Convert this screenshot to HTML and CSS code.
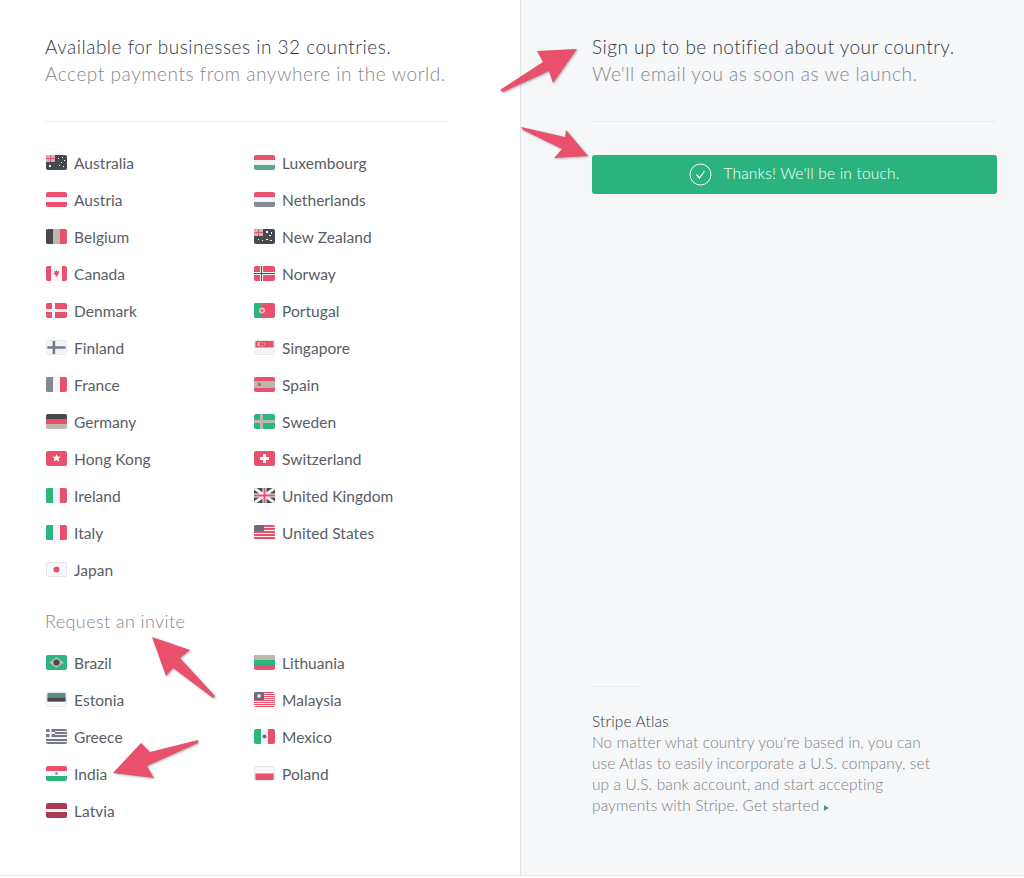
FILE: index.html
```html
<!DOCTYPE html>
<html lang="en">

<head>
    <meta charset="UTF-8">
    <title>Global availability</title>
    <link rel="stylesheet" href="styles.css">
</head>

<body>
    <div class="page">
        <div class="left">
            <h2 class="title">Available for businesses in 32 countries.</h2>
            <p class="sub">Accept payments from anywhere in the world.</p>
            <div class="rule"></div>
            <ul class="countries">
                <li><svg class="flag" viewBox="0 0 21 15"><rect width="21" height="15" fill="#47494f"/><rect width="9" height="7" fill="#b9bbc0"/><path d="M0 3h9v1H0zM4 0h1v7H4z" fill="#e8506c"/><path d="M3 10h2v2H3zM12 3h1v1h-1zM16 2h1v1h-1zM18 5h1v1h-1zM15 7h1v1h-1zM13 10h1v1h-1zM17 11h1v1h-1z" fill="#fff"/></svg>Australia</li>
                <li><svg class="flag" viewBox="0 0 21 15"><rect width="21" height="15" fill="#f2f5f7"/><rect width="21" height="5" fill="#e8506c"/><rect y="10" width="21" height="5" fill="#5fa58c"/></svg>Luxembourg</li>
                <li><svg class="flag" viewBox="0 0 21 15"><rect width="21" height="15" fill="#e8506c"/><rect y="5" width="21" height="5" fill="#f2f5f7"/></svg>Austria</li>
                <li><svg class="flag" viewBox="0 0 21 15"><rect width="21" height="15" fill="#f2f5f7"/><rect width="21" height="5" fill="#e8506c"/><rect y="10" width="21" height="5" fill="#86898f"/></svg>Netherlands</li>
                <li><svg class="flag" viewBox="0 0 21 15"><rect width="21" height="15" fill="#e8506c"/><rect width="7" height="15" fill="#47494f"/><rect x="7" width="7" height="15" fill="#bbb8ae"/></svg>Belgium</li>
                <li><svg class="flag" viewBox="0 0 21 15"><rect width="21" height="15" fill="#47494f"/><rect width="9" height="7" fill="#b9bbc0"/><path d="M0 3h9v1H0zM4 0h1v7H4z" fill="#e8506c"/><path d="M12 2h2v2h-2zM17 3h1v2h-1zM15 6h2v1h-2zM4 10h1v1H4zM8 11h1v1H8zM12 10h2v1h-2zM16 11h2v1h-2z" fill="#fff"/></svg>New Zealand</li>
                <li><svg class="flag" viewBox="0 0 21 15"><rect width="21" height="15" fill="#f2f5f7"/><rect width="5" height="15" fill="#e8506c"/><rect x="16" width="5" height="15" fill="#e8506c"/><path d="M10.500 4l1 1.500 1.500-.500-.5 2 1 .5-2 1.500.2 1.500h-2.400l.2-1.500-2-1.500 1-.5-.5-2 1.500.5z" fill="#e8506c"/></svg>Canada</li>
                <li><svg class="flag" viewBox="0 0 21 15"><rect width="21" height="15" fill="#e8506c"/><path d="M0 6h21v3H0zM6 0h3v15H6z" fill="#f2f5f7"/><path d="M0 7h21v1H0zM7 0h1v15H7z" fill="#47494f"/></svg>Norway</li>
                <li><svg class="flag" viewBox="0 0 21 15"><rect width="21" height="15" fill="#e8506c"/><path d="M0 6h21v3H0zM6 0h3v15H6z" fill="#f2f5f7"/></svg>Denmark</li>
                <li><svg class="flag" viewBox="0 0 21 15"><rect width="21" height="15" fill="#e8506c"/><path d="M0 0h8v15H0z" fill="#2bb57f"/><circle cx="8" cy="7.500" r="3" fill="#f2b8c2"/><circle cx="8" cy="7.500" r="1.200" fill="#e8506c"/></svg>Portugal</li>
                <li><svg class="flag flag-line" viewBox="0 0 21 15"><rect width="21" height="15" fill="#f2f5f7"/><path d="M0 6h21v3H0zM6 0h3v15H6z" fill="#777a81"/></svg>Finland</li>
                <li><svg class="flag flag-line" viewBox="0 0 21 15"><rect width="21" height="15" fill="#f2f5f7"/><rect width="21" height="7.500" fill="#e8506c"/><circle cx="5" cy="3.700" r="2.300" fill="#fff"/><circle cx="6" cy="3.700" r="2" fill="#e8506c"/><path d="M8 2h1v1H8zM10 3h1v1h-1zM8 5h1v1H8z" fill="#fff"/></svg>Singapore</li>
                <li><svg class="flag" viewBox="0 0 21 15"><rect width="21" height="15" fill="#e8506c"/><rect width="7" height="15" fill="#86898f"/><rect x="7" width="7" height="15" fill="#f2f5f7"/></svg>France</li>
                <li><svg class="flag" viewBox="0 0 21 15"><rect width="21" height="15" fill="#e8506c"/><rect y="4" width="21" height="7" fill="#bbb8ae"/><rect x="4" y="6" width="3" height="3" fill="#e8506c"/></svg>Spain</li>
                <li><svg class="flag" viewBox="0 0 21 15"><rect width="21" height="15" fill="#bbb8ae"/><rect width="21" height="5" fill="#47494f"/><rect y="5" width="21" height="5" fill="#e8506c"/></svg>Germany</li>
                <li><svg class="flag" viewBox="0 0 21 15"><rect width="21" height="15" fill="#2bb57f"/><path d="M0 6h21v3H0zM6 0h3v15H6z" fill="#bbb8ae"/></svg>Sweden</li>
                <li><svg class="flag" viewBox="0 0 21 15"><rect width="21" height="15" fill="#e8506c"/><path d="M10.500 3l1.200 2.800 3-.2-2.200 2 .8 3-2.800-1.600-2.800 1.600.8-3-2.200-2 3 .2z" fill="#fff"/></svg>Hong Kong</li>
                <li><svg class="flag" viewBox="0 0 21 15"><rect width="21" height="15" fill="#e8506c"/><path d="M9 3h3v3h3v3h-3v3H9V9H6V6h3z" fill="#fff"/></svg>Switzerland</li>
                <li><svg class="flag" viewBox="0 0 21 15"><rect width="21" height="15" fill="#e8506c"/><rect width="7" height="15" fill="#2bb57f"/><rect x="7" width="7" height="15" fill="#f2f5f7"/></svg>Ireland</li>
                <li><svg class="flag" viewBox="0 0 21 15"><rect width="21" height="15" fill="#47494f"/><path d="M0 0l21 15M21 0L0 15" stroke="#f2f5f7" stroke-width="3"/><path d="M0 5.500h21v4H0zM8.500 0h4v15h-4z" fill="#f2f5f7"/><path d="M0 6.500h21v2H0zM9.500 0h2v15h-2z" fill="#e8506c"/></svg>United Kingdom</li>
                <li><svg class="flag" viewBox="0 0 21 15"><rect width="21" height="15" fill="#e8506c"/><rect width="7" height="15" fill="#2bb57f"/><rect x="7" width="7" height="15" fill="#f2f5f7"/></svg>Italy</li>
                <li><svg class="flag" viewBox="0 0 21 15"><rect width="21" height="15" fill="#f2f5f7"/><path d="M0 0h21v2H0zM0 3h21v2H0zM0 6h21v2H0zM0 9h21v2H0zM0 12h21v2H0z" fill="#e8506c"/><rect width="10" height="6" fill="#6a6d75"/></svg>United States</li>
                <li><svg class="flag flag-line" viewBox="0 0 21 15"><rect width="21" height="15" fill="#f7f8fa"/><circle cx="10.500" cy="7.500" r="3.500" fill="#e8506c"/></svg>Japan</li>
            </ul>

            <h3 class="invite">Request an invite</h3>
            <ul class="countries">
                <li><svg class="flag" viewBox="0 0 21 15"><rect width="21" height="15" fill="#2bb57f"/><path d="M10.500 2L18 7.500 10.500 13 3 7.500z" fill="#bbb8ae"/><circle cx="10.500" cy="7.500" r="3" fill="#47494f"/></svg>Brazil</li>
                <li><svg class="flag" viewBox="0 0 21 15"><rect width="21" height="15" fill="#e8506c"/><rect width="21" height="5" fill="#bbb8ae"/><rect y="5" width="21" height="5" fill="#2bb57f"/></svg>Lithuania</li>
                <li><svg class="flag flag-line" viewBox="0 0 21 15"><rect width="21" height="15" fill="#f7f8fa"/><rect width="21" height="5" fill="#5b8f85"/><rect y="5" width="21" height="5" fill="#47494f"/></svg>Estonia</li>
                <li><svg class="flag" viewBox="0 0 21 15"><rect width="21" height="15" fill="#f2f5f7"/><path d="M0 0h21v1H0zM0 2h21v1H0zM0 4h21v1H0zM0 6h21v1H0zM0 8h21v1H0zM0 10h21v1H0zM0 12h21v1H0zM0 14h21v1H0z" fill="#e8506c"/><rect width="10" height="8" fill="#6a6d75"/><circle cx="5" cy="4" r="2" fill="#d9dade"/></svg>Malaysia</li>
                <li><svg class="flag" viewBox="0 0 21 15"><rect width="21" height="15" fill="#f2f5f7"/><path d="M0 0h21v2H0zM0 3h21v2H0zM0 6h21v2H0zM0 10h21v2H0zM0 13h21v2H0z" fill="#777a81"/><rect width="9" height="8" fill="#777a81"/><path d="M0 3h9v2H0zM3.500 0h2v8h-2z" fill="#f2f5f7"/></svg>Greece</li>
                <li><svg class="flag" viewBox="0 0 21 15"><rect width="21" height="15" fill="#f2f5f7"/><rect width="7" height="15" fill="#2bb57f"/><rect x="14" width="7" height="15" fill="#e8506c"/><circle cx="10.500" cy="7.500" r="2" fill="#6a6d75"/></svg>Mexico</li>
                <li><svg class="flag" viewBox="0 0 21 15"><rect width="21" height="15" fill="#f2f5f7"/><rect width="21" height="5" fill="#e8506c"/><rect y="10" width="21" height="5" fill="#2bb57f"/><circle cx="10.500" cy="7.500" r="1.300" fill="#86898f"/></svg>India</li>
                <li><svg class="flag flag-line" viewBox="0 0 21 15"><rect width="21" height="15" fill="#f7f8fa"/><rect y="7.500" width="21" height="7.500" fill="#e8506c"/></svg>Poland</li>
                <li><svg class="flag" viewBox="0 0 21 15"><rect width="21" height="15" fill="#a83a54"/><rect y="6" width="21" height="3" fill="#f2f5f7"/></svg>Latvia</li>
            </ul>
        </div>

        <div class="right">
            <h2 class="title">Sign up to be notified about your country.</h2>
            <p class="sub">We'll email you as soon as we launch.</p>
            <div class="rule"></div>
            <div class="thanks">
                <svg class="check" viewBox="0 0 23 23"><circle cx="11.500" cy="11.500" r="10.500" fill="none" stroke="#fff" stroke-width="1"/><path d="M7.500 11.500l3 3.500 5-7" fill="none" stroke="#fff" stroke-width="1.200"/></svg>
                <span>Thanks! We'll be in touch.</span>
            </div>
            <div class="atlas">
                <div class="rule-short"></div>
                <h4>Stripe Atlas</h4>
                <p>No matter what country you're based in, you can use Atlas to easily incorporate a U.S. company, set up a U.S. bank account, and start accepting payments with Stripe. Get started <span class="more"></span></p>
            </div>
        </div>

        <!-- red annotation arrows drawn over the page -->
        <svg class="arrows" viewBox="0 0 1024 878">
            <path d="M500 90L543 62 537 51 577 49 553 83 549 71 503 92z"/>
            <path d="M521 127L565 137 566 130 588 156 554 158 562 149 523 130z"/>
            <path d="M152 637L190 650 180 658 215 696 213 698 173 668 166 676z"/>
            <path d="M198 740L150 752 141 743 113 773 154 778 147 766 198 743z"/>
        </svg>
    </div>
</body>
</html>
```

FILE: styles.css
```css
* {
    margin: 0;
    padding: 0;
    box-sizing: border-box;
}

body {
    background: #fff;
    font-family: "Lato", "Open Sans", sans-serif;
    color: #5a5d64;
}

.page {
    position: relative;
    display: flex;
    height: 876px;
    border-bottom: 1px solid #e6e9ec;
}

.left {
    width: 520px;
    padding: 33px 72px 0 45px;
}

.right {
    flex: 1;
    display: flex;
    flex-direction: column;
    padding: 33px 27px 0 71px;
    background: #f5f7f9;
    border-left: 1px solid #e1e4e7;
}

.title {
    font-size: 19px;
    line-height: 27px;
    font-weight: 300;
    letter-spacing: .5px;
    color: #33363e;
}

.sub {
    font-size: 19px;
    line-height: 27px;
    font-weight: 300;
    letter-spacing: .55px;
    color: #85878c;
}

.rule {
    height: 1px;
    margin: 34px 0 22px;
    background: #f0f1f3;
}

.right .rule {
    margin-bottom: 33px;
    background: #e9ebee;
}

.countries {
    display: grid;
    grid-template-columns: 208px 1fr;
    list-style: none;
}

.countries li {
    display: flex;
    align-items: center;
    gap: 7px;
    height: 37px;
    font-size: 15.5px;
    letter-spacing: .05px;
}

.flag {
    width: 21px;
    height: 15px;
    margin-left: 1px;
    border-radius: 2px;
    flex: none;
}

.flag-line {
    border: 1px solid #e3e6ea;
}

.invite {
    margin: 20px 0 9px;
    font-size: 18px;
    line-height: 27px;
    font-weight: 300;
    letter-spacing: .4px;
    color: #85878c;
}

.thanks {
    display: flex;
    align-items: center;
    justify-content: center;
    gap: 11px;
    height: 39px;
    padding-bottom: 1px;
    background: #2ab37f;
    border-radius: 3px;
    color: #fff;
    font-size: 15.5px;
    font-weight: 300;
    letter-spacing: .2px;
}

.thanks span {
    margin-bottom: 2px;
}

.check {
    width: 23px;
    height: 23px;
}

.atlas {
    margin-top: auto;
    padding-bottom: 59px;
    max-width: 345px;
}

.rule-short {
    width: 49px;
    height: 1px;
    margin-bottom: 24px;
    background: #e9ebee;
}

.atlas h4 {
    font-size: 15.5px;
    line-height: 21px;
    font-weight: 300;
    letter-spacing: .15px;
    color: #33363e;
}

.atlas p {
    font-size: 15.5px;
    line-height: 21px;
    font-weight: 300;
    letter-spacing: .1px;
    color: #7f8186;
}

.more {
    display: inline-block;
    border-left: 5px solid #4c9c84;
    border-top: 3.5px solid transparent;
    border-bottom: 3.5px solid transparent;
}

.arrows {
    position: absolute;
    left: 0;
    top: 0;
    width: 1024px;
    height: 878px;
    fill: #e8506c;
    filter: drop-shadow(1px 1px 1px rgba(0, 0, 0, .3));
    pointer-events: none;
}
```
